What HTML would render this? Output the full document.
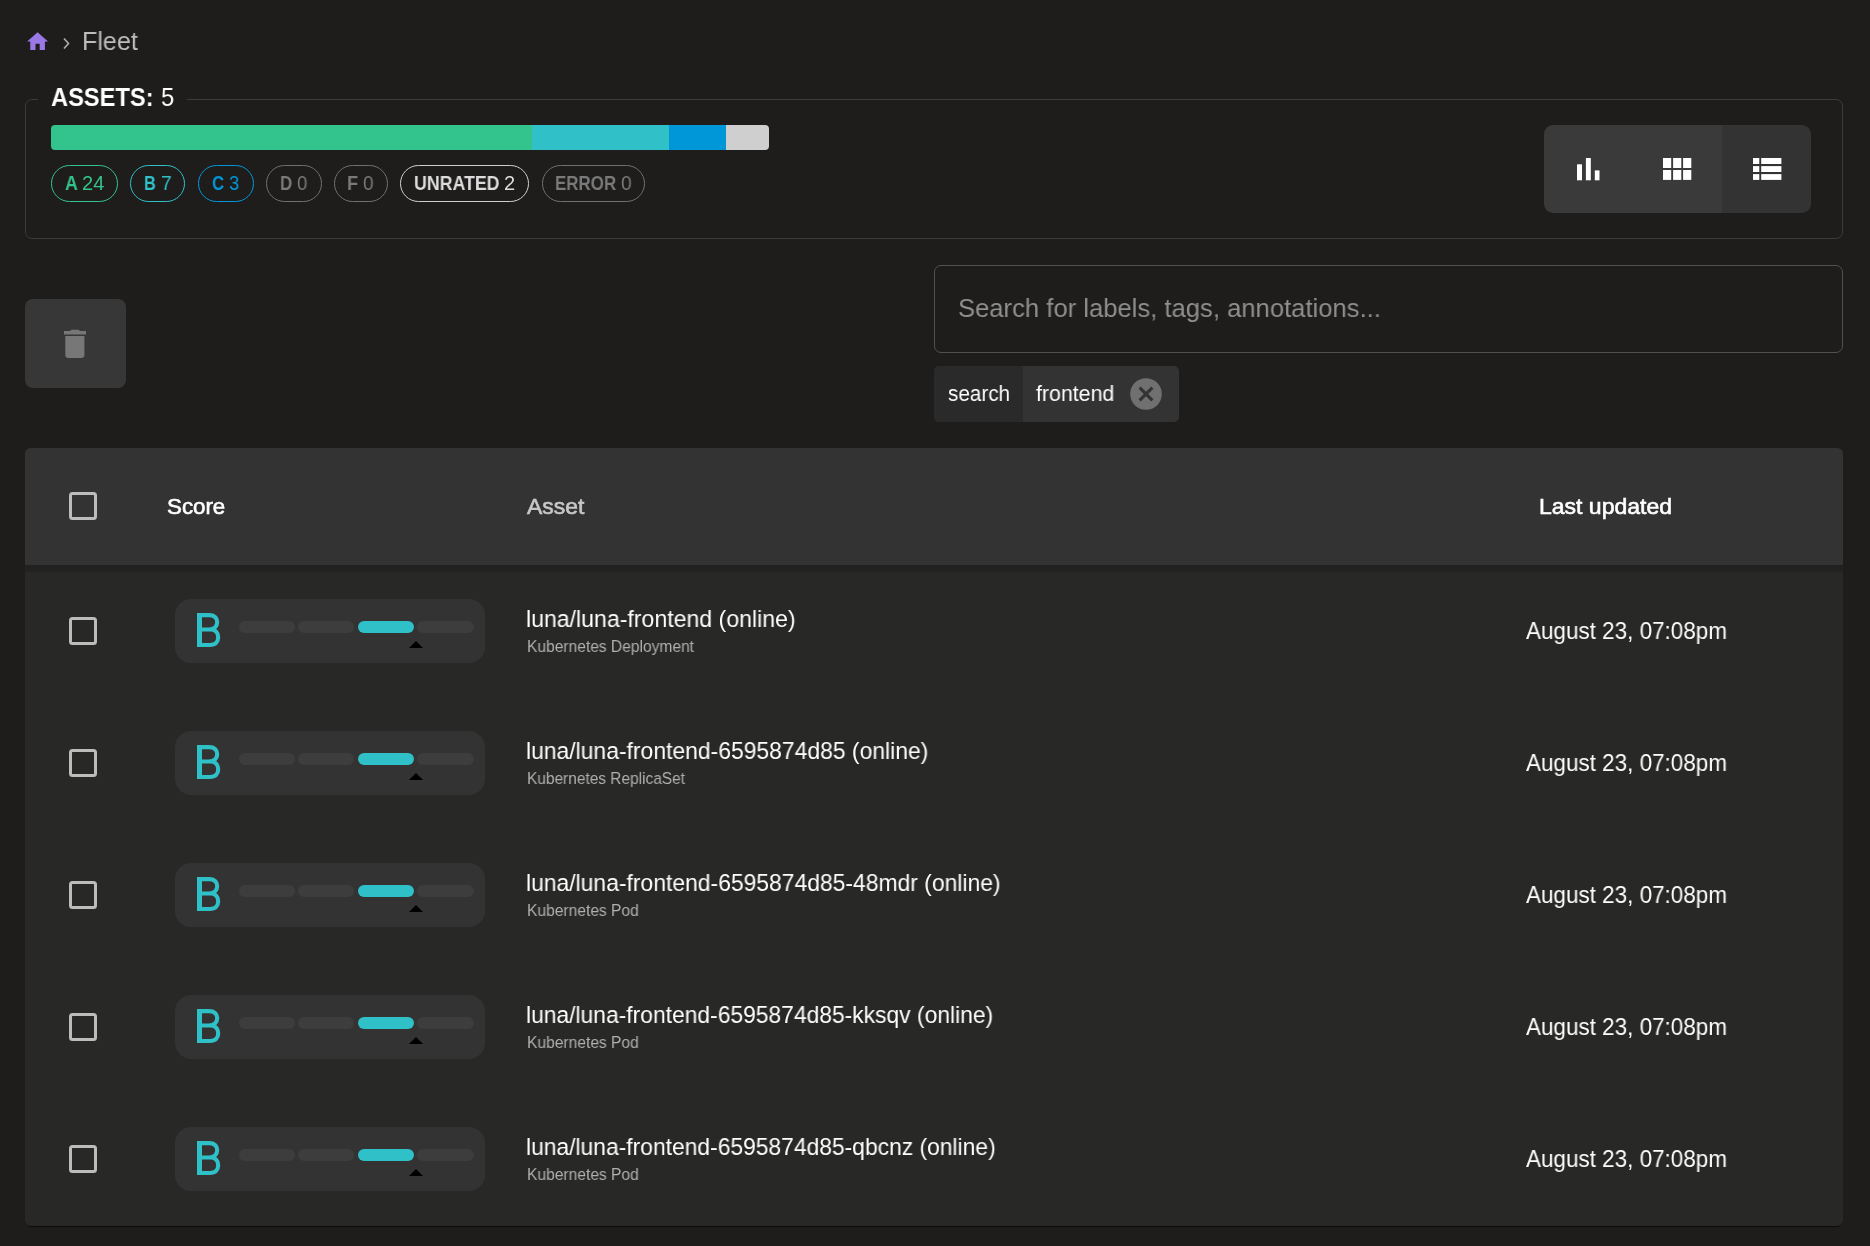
<!DOCTYPE html>
<html><head><meta charset="utf-8">
<style>
*{box-sizing:border-box;margin:0;padding:0}
html,body{width:1870px;height:1246px;overflow:hidden;background:#1e1d1c;font-family:"Liberation Sans",sans-serif;color:#fff}
.a{position:absolute}
.t{position:absolute;white-space:nowrap;line-height:1;transform-origin:0 0;will-change:transform}
.fs{position:absolute;left:25px;top:99px;width:1818px;height:140px;border:1px solid #3d3c3b;border-radius:7px}
.legend{position:absolute;left:38px;top:86px;width:149px;height:26px;background:#1e1d1c}
.bar{position:absolute;top:125px;height:25px}
.chip{position:absolute;top:165px;height:37px;border:1.5px solid;border-radius:19px}
.tg{position:absolute;top:125px;height:88px;width:89px;background:#3a3a3a}
.cb{position:absolute;left:68.8px;width:28.3px;height:28.3px;border:3.2px solid #bcbcbc;border-radius:3.5px}
.sbox{position:absolute;left:175px;width:310px;height:64.6px;background:#333333;border-radius:16px}
.sb{position:absolute;top:22px;height:12px;width:56.4px;border-radius:6px;background:#3d3d3d}
.tri{position:absolute;left:234px;top:42px;width:0;height:0;border-left:7px solid transparent;border-right:7px solid transparent;border-bottom:7px solid #000}
.bg{position:absolute;left:22px;top:14px}
</style></head><body>

<svg class="a" style="left:25px;top:29px" width="25.2" height="25.2" viewBox="0 0 24 24"><path fill="#9a78e6" d="M10 20v-6h4v6h5v-8h3L12 3 2 12h3v8z"/></svg>
<svg class="a" style="left:62px;top:37px" width="9" height="13" viewBox="0 0 9 13"><path d="M2 1.5L6.5 6.5L2 11.5" fill="none" stroke="#b0b0b0" stroke-width="1.6"/></svg>

<div class="fs"></div>
<div class="legend"></div>

<div class="bar" style="left:51px;width:481px;background:#33c38c;border-radius:4px 0 0 4px"></div>
<div class="bar" style="left:532px;width:137px;background:#2fc0c8"></div>
<div class="bar" style="left:669px;width:57px;background:#0097d9"></div>
<div class="bar" style="left:726px;width:43px;background:#cfcfcf;border-radius:0 4px 4px 0"></div>

<div class="chip" style="left:51px;width:67px;border-color:#33c38c"></div>
<div class="chip" style="left:130px;width:55px;border-color:#2fc0c8"></div>
<div class="chip" style="left:198px;width:56px;border-color:#0097d9"></div>
<div class="chip" style="left:266px;width:56px;border-color:#707070"></div>
<div class="chip" style="left:334px;width:54px;border-color:#707070"></div>
<div class="chip" style="left:400px;width:129px;border-color:#cfcfcf"></div>
<div class="chip" style="left:542px;width:103px;border-color:#707070"></div>

<div class="tg" style="left:1544px;border-radius:9px 0 0 9px"></div>
<div class="tg" style="left:1633px"></div>
<div class="tg" style="left:1722px;background:#333333;border-radius:0 9px 9px 0"></div>
<svg class="a" style="left:1576.8px;top:157.8px" width="23" height="23" viewBox="0 0 23 23"><g fill="#fff"><rect x="0" y="6.3" width="5" height="16" /><rect x="8.9" y="0" width="4.9" height="22.3"/><rect x="17.8" y="12.4" width="4.7" height="9.9"/></g></svg>
<svg class="a" style="left:1662.8px;top:157.9px" width="29" height="22" viewBox="0 0 29 22"><g fill="#fff"><rect x="0" y="0" width="8.2" height="10"/><rect x="10.1" y="0" width="8.2" height="10"/><rect x="20.1" y="0" width="8.2" height="10"/><rect x="0" y="12" width="8.2" height="9.9"/><rect x="10.1" y="12" width="8.2" height="9.9"/><rect x="20.1" y="12" width="8.2" height="9.9"/></g></svg>
<svg class="a" style="left:1752.8px;top:157.9px" width="29" height="22" viewBox="0 0 29 22"><g fill="#fff"><rect x="0" y="0" width="6.3" height="6"/><rect x="8.2" y="0" width="20.2" height="6"/><rect x="0" y="8.1" width="6.3" height="5.9"/><rect x="8.2" y="8.1" width="20.2" height="5.9"/><rect x="0" y="16.1" width="6.3" height="5.8"/><rect x="8.2" y="16.1" width="20.2" height="5.8"/></g></svg>

<div class="a" style="left:25px;top:299px;width:101px;height:89px;background:#373737;border-radius:8px"></div>
<svg class="a" style="left:60px;top:326px" width="30" height="33" viewBox="0 0 30 33"><path fill="#777777" d="M4 5h6.2l0.8-0.9q0.4-0.4 1-0.4h6q0.6 0 1 0.4l0.8 0.9h6.2v3.4H4z M5.3 10.1h19.1v19a3 3 0 0 1-3 3h-13.1a3 3 0 0 1-3-3z"/></svg>

<div class="a" style="left:934px;top:265px;width:909px;height:88px;border:1px solid #515150;border-radius:7px"></div>
<div class="a" style="left:934px;top:366px;width:245px;height:56px;background:#333333;border-radius:5px;overflow:hidden">
  <div class="a" style="left:0;top:0;width:89px;height:56px;background:#2a2a2a"></div>
</div>
<svg class="a" style="left:1130px;top:378px" width="32" height="32" viewBox="0 0 32 32"><circle cx="16" cy="16" r="15.8" fill="#707070"/><path d="M9.6 9.6L22.4 22.4M22.4 9.6L9.6 22.4" stroke="#333333" stroke-width="3"/></svg>

<div class="a" style="left:25px;top:448px;width:1818px;height:778px;background:#282827;border-radius:6px;box-shadow:0 2px 1px -1px rgba(0,0,0,0.6);overflow:hidden">
  <div class="a" style="left:0;top:0;width:1818px;height:117px;background:#333333"></div>
  <div class="a" style="left:0;top:117px;width:1818px;height:7px;background:linear-gradient(rgba(0,0,0,0.2),rgba(0,0,0,0.12))"></div>
</div>
<div class="cb" style="top:491.8px"></div>
<div class="cb" style="top:616.85px"></div>
<div class="sbox" style="top:598.7px"><svg class="bg" width="24" height="34" viewBox="0 0 24 34"><path d="M2.5 34V0" fill="none" stroke="#2fc0c8" stroke-width="5"/><path d="M2.2 2.1H12c5.4 0 8.2 2.8 8.2 7c0 4.2-2.8 7.4-8.2 7.4H2.2M2.2 16.5H13c5.5 0 8.2 3.3 8.2 7.7c0 4.6-2.7 7.75-8.2 7.75H2" fill="none" stroke="#2fc0c8" stroke-width="4.1"/></svg><div class="sb" style="left:63.7px"></div><div class="sb" style="left:122.8px"></div><div class="sb" style="left:182.8px;background:#2fc0c8"></div><div class="sb" style="left:241.9px;width:57px"></div><div class="tri"></div></div>
<div class="cb" style="top:748.85px"></div>
<div class="sbox" style="top:730.7px"><svg class="bg" width="24" height="34" viewBox="0 0 24 34"><path d="M2.5 34V0" fill="none" stroke="#2fc0c8" stroke-width="5"/><path d="M2.2 2.1H12c5.4 0 8.2 2.8 8.2 7c0 4.2-2.8 7.4-8.2 7.4H2.2M2.2 16.5H13c5.5 0 8.2 3.3 8.2 7.7c0 4.6-2.7 7.75-8.2 7.75H2" fill="none" stroke="#2fc0c8" stroke-width="4.1"/></svg><div class="sb" style="left:63.7px"></div><div class="sb" style="left:122.8px"></div><div class="sb" style="left:182.8px;background:#2fc0c8"></div><div class="sb" style="left:241.9px;width:57px"></div><div class="tri"></div></div>
<div class="cb" style="top:880.85px"></div>
<div class="sbox" style="top:862.7px"><svg class="bg" width="24" height="34" viewBox="0 0 24 34"><path d="M2.5 34V0" fill="none" stroke="#2fc0c8" stroke-width="5"/><path d="M2.2 2.1H12c5.4 0 8.2 2.8 8.2 7c0 4.2-2.8 7.4-8.2 7.4H2.2M2.2 16.5H13c5.5 0 8.2 3.3 8.2 7.7c0 4.6-2.7 7.75-8.2 7.75H2" fill="none" stroke="#2fc0c8" stroke-width="4.1"/></svg><div class="sb" style="left:63.7px"></div><div class="sb" style="left:122.8px"></div><div class="sb" style="left:182.8px;background:#2fc0c8"></div><div class="sb" style="left:241.9px;width:57px"></div><div class="tri"></div></div>
<div class="cb" style="top:1012.85px"></div>
<div class="sbox" style="top:994.7px"><svg class="bg" width="24" height="34" viewBox="0 0 24 34"><path d="M2.5 34V0" fill="none" stroke="#2fc0c8" stroke-width="5"/><path d="M2.2 2.1H12c5.4 0 8.2 2.8 8.2 7c0 4.2-2.8 7.4-8.2 7.4H2.2M2.2 16.5H13c5.5 0 8.2 3.3 8.2 7.7c0 4.6-2.7 7.75-8.2 7.75H2" fill="none" stroke="#2fc0c8" stroke-width="4.1"/></svg><div class="sb" style="left:63.7px"></div><div class="sb" style="left:122.8px"></div><div class="sb" style="left:182.8px;background:#2fc0c8"></div><div class="sb" style="left:241.9px;width:57px"></div><div class="tri"></div></div>
<div class="cb" style="top:1144.85px"></div>
<div class="sbox" style="top:1126.7px"><svg class="bg" width="24" height="34" viewBox="0 0 24 34"><path d="M2.5 34V0" fill="none" stroke="#2fc0c8" stroke-width="5"/><path d="M2.2 2.1H12c5.4 0 8.2 2.8 8.2 7c0 4.2-2.8 7.4-8.2 7.4H2.2M2.2 16.5H13c5.5 0 8.2 3.3 8.2 7.7c0 4.6-2.7 7.75-8.2 7.75H2" fill="none" stroke="#2fc0c8" stroke-width="4.1"/></svg><div class="sb" style="left:63.7px"></div><div class="sb" style="left:122.8px"></div><div class="sb" style="left:182.8px;background:#2fc0c8"></div><div class="sb" style="left:241.9px;width:57px"></div><div class="tri"></div></div>
<div class="t" style="left:82.34px;top:27px;line-height:28px;font-size:25.67px;font-weight:normal;color:#bdbdbd;transform:scaleX(0.9774);">Fleet</div>
<div class="t" style="left:50.63px;top:82px;line-height:30px;font-size:26.16px;font-weight:bold;color:#ffffff;transform:scaleX(0.9043);">ASSETS:</div>
<div class="t" style="left:160.56px;top:82px;line-height:30px;font-size:26.16px;font-weight:normal;color:#ffffff;transform:scaleX(0.9075);">5</div>
<div class="t" style="left:64.52px;top:172px;line-height:22px;font-size:20.06px;font-weight:bold;color:#33c38c;transform:scaleX(0.8847);">A</div>
<div class="t" style="left:81.88px;top:172px;line-height:22px;font-size:20.06px;font-weight:normal;color:#33c38c;transform:scaleX(0.9822);">24</div>
<div class="t" style="left:143.78px;top:172px;line-height:22px;font-size:20.06px;font-weight:bold;color:#2fc0c8;transform:scaleX(0.8136);">B</div>
<div class="t" style="left:161.00px;top:172px;line-height:22px;font-size:20.06px;font-weight:normal;color:#2fc0c8;transform:scaleX(0.9572);">7</div>
<div class="t" style="left:211.67px;top:172px;line-height:22px;font-size:20.06px;font-weight:bold;color:#0097d9;transform:scaleX(0.8385);">C</div>
<div class="t" style="left:229.33px;top:172px;line-height:22px;font-size:20.06px;font-weight:normal;color:#0097d9;transform:scaleX(0.9160);">3</div>
<div class="t" style="left:279.64px;top:172px;line-height:22px;font-size:20.06px;font-weight:bold;color:#7a7a7a;transform:scaleX(0.8455);">D</div>
<div class="t" style="left:297.42px;top:172px;line-height:22px;font-size:20.06px;font-weight:normal;color:#7a7a7a;transform:scaleX(0.9273);">0</div>
<div class="t" style="left:347.47px;top:172px;line-height:22px;font-size:20.06px;font-weight:bold;color:#7a7a7a;transform:scaleX(0.8992);">F</div>
<div class="t" style="left:363.21px;top:172px;line-height:22px;font-size:20.06px;font-weight:normal;color:#7a7a7a;transform:scaleX(0.9472);">0</div>
<div class="t" style="left:413.77px;top:172px;line-height:22px;font-size:20.06px;font-weight:bold;color:#dcdcdc;transform:scaleX(0.8859);">UNRATED</div>
<div class="t" style="left:504.48px;top:172px;line-height:22px;font-size:20.06px;font-weight:normal;color:#dcdcdc;transform:scaleX(0.9785);">2</div>
<div class="t" style="left:554.54px;top:172px;line-height:22px;font-size:20.06px;font-weight:bold;color:#7a7a7a;transform:scaleX(0.8446);">ERROR</div>
<div class="t" style="left:620.90px;top:172px;line-height:22px;font-size:20.06px;font-weight:normal;color:#7a7a7a;transform:scaleX(0.9572);">0</div>
<div class="t" style="left:957.80px;top:293px;line-height:30px;font-size:26.64px;font-weight:normal;color:#8f8f8f;transform:scaleX(0.9620);">Search for labels, tags, annotations...</div>
<div class="t" style="left:948.28px;top:381px;line-height:25px;font-size:21.81px;font-weight:normal;color:#ffffff;transform:scaleX(0.9486);">search</div>
<div class="t" style="left:1036.00px;top:381px;line-height:25px;font-size:21.81px;font-weight:normal;color:#ffffff;transform:scaleX(0.9798);">frontend</div>
<div class="t" style="left:166.80px;top:494px;line-height:25px;font-size:21.95px;font-weight:normal;color:#ffffff;transform:scaleX(1.0169);-webkit-text-stroke:0.6px #ffffff;">Score</div>
<div class="t" style="left:527.30px;top:494px;line-height:25px;font-size:22.09px;font-weight:normal;color:#c8c8c8;transform:scaleX(1.0392);-webkit-text-stroke:0.6px #c8c8c8;">Asset</div>
<div class="t" style="left:1538.60px;top:494px;line-height:25px;font-size:22.22px;font-weight:normal;color:#ffffff;transform:scaleX(1.0350);-webkit-text-stroke:0.6px #ffffff;">Last updated</div>
<div class="t" style="left:526.06px;top:606px;line-height:26px;font-size:23.46px;font-weight:normal;color:#ffffff;transform:scaleX(0.9845);">luna/luna-frontend (online)</div>
<div class="t" style="left:526.68px;top:637px;line-height:18px;font-size:16.13px;font-weight:normal;color:#b0b0b0;transform:scaleX(0.9663);">Kubernetes Deployment</div>
<div class="t" style="left:1525.80px;top:618px;line-height:26px;font-size:23.55px;font-weight:normal;color:#ffffff;transform:scaleX(0.9535);">August 23, 07:08pm</div>
<div class="t" style="left:526.07px;top:738px;line-height:26px;font-size:23.46px;font-weight:normal;color:#ffffff;transform:scaleX(0.9763);">luna/luna-frontend-6595874d85 (online)</div>
<div class="t" style="left:526.69px;top:769px;line-height:18px;font-size:16.13px;font-weight:normal;color:#b0b0b0;transform:scaleX(0.9590);">Kubernetes ReplicaSet</div>
<div class="t" style="left:1525.80px;top:750px;line-height:26px;font-size:23.55px;font-weight:normal;color:#ffffff;transform:scaleX(0.9535);">August 23, 07:08pm</div>
<div class="t" style="left:526.07px;top:870px;line-height:26px;font-size:23.46px;font-weight:normal;color:#ffffff;transform:scaleX(0.9758);">luna/luna-frontend-6595874d85-48mdr (online)</div>
<div class="t" style="left:526.68px;top:901px;line-height:18px;font-size:16.13px;font-weight:normal;color:#b0b0b0;transform:scaleX(0.9679);">Kubernetes Pod</div>
<div class="t" style="left:1525.80px;top:882px;line-height:26px;font-size:23.55px;font-weight:normal;color:#ffffff;transform:scaleX(0.9535);">August 23, 07:08pm</div>
<div class="t" style="left:526.07px;top:1002px;line-height:26px;font-size:23.46px;font-weight:normal;color:#ffffff;transform:scaleX(0.9736);">luna/luna-frontend-6595874d85-kksqv (online)</div>
<div class="t" style="left:526.68px;top:1033px;line-height:18px;font-size:16.13px;font-weight:normal;color:#b0b0b0;transform:scaleX(0.9679);">Kubernetes Pod</div>
<div class="t" style="left:1525.80px;top:1014px;line-height:26px;font-size:23.55px;font-weight:normal;color:#ffffff;transform:scaleX(0.9535);">August 23, 07:08pm</div>
<div class="t" style="left:526.07px;top:1134px;line-height:26px;font-size:23.46px;font-weight:normal;color:#ffffff;transform:scaleX(0.9735);">luna/luna-frontend-6595874d85-qbcnz (online)</div>
<div class="t" style="left:526.68px;top:1165px;line-height:18px;font-size:16.13px;font-weight:normal;color:#b0b0b0;transform:scaleX(0.9679);">Kubernetes Pod</div>
<div class="t" style="left:1525.80px;top:1146px;line-height:26px;font-size:23.55px;font-weight:normal;color:#ffffff;transform:scaleX(0.9535);">August 23, 07:08pm</div>
</body></html>
